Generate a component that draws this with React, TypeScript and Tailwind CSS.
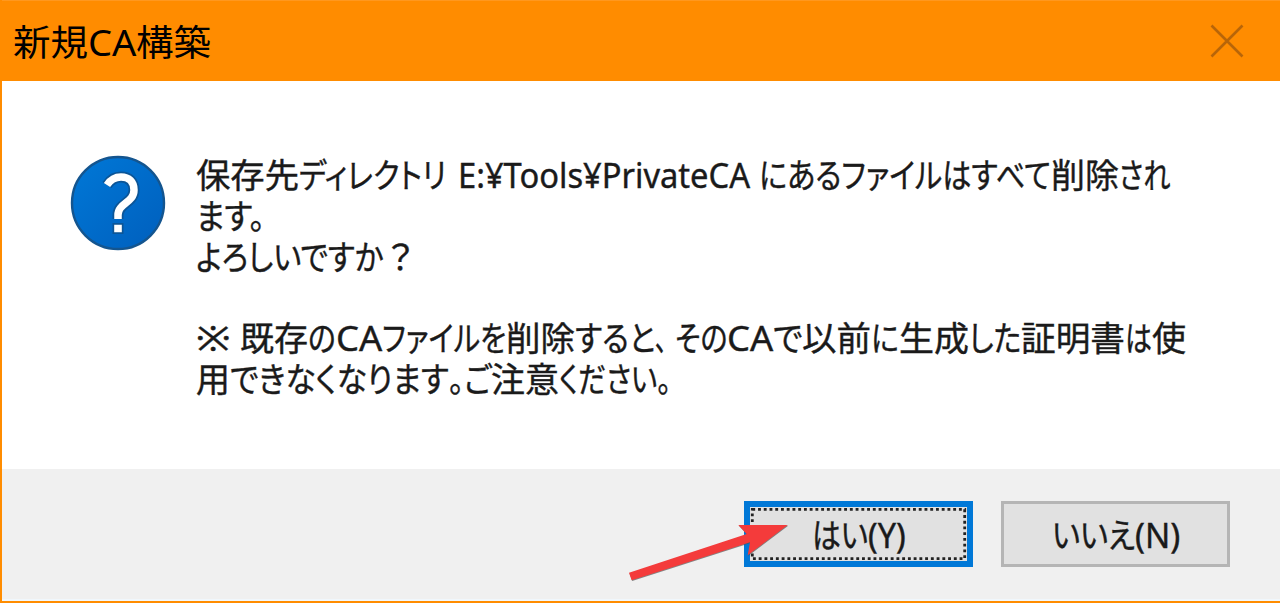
import { useLayoutEffect, useRef } from "react";

/** A run of text condensed or widened to occupy exactly `w` pixels. */
function Run({ t, w }: { t: string; w: number }) {
  const ref = useRef<HTMLSpanElement>(null);
  useLayoutEffect(() => {
    const fit = () => {
      const el = ref.current;
      if (el) el.style.transform = `scaleX(${w / el.offsetWidth})`;
    };
    fit();
    document.fonts?.ready.then(fit);
  }, [w, t]);
  return (
    <span className="block shrink-0" style={{ width: w }}>
      <span ref={ref} className="inline-block origin-left whitespace-pre">
        {t}
      </span>
    </span>
  );
}

type Piece = [string, number];

function Line({ runs }: { runs: Piece[] }) {
  return (
    <div className="flex h-[40.7px] items-center">
      {runs.map(([t, w], i) => (
        <Run key={i} t={t} w={w} />
      ))}
    </div>
  );
}

const message: Piece[][] = [
  [["保存先", 103], ["ディレクトリ", 147], [" ", 12], ["E:¥Tools¥PrivateCA", 292], [" ", 9], ["にあるファイルはすべて", 292], ["削除", 68], ["され", 51]],
  [["ます。", 69]],
  [["よろしいですか", 188], [" ", 4], ["？", 24]],
  [],
  [["※", 34], [" ", 10], ["既存", 68], ["の", 28], ["CA", 46], ["ファイルを", 124], ["削除", 69], ["すると", 80], ["、", 12], [" ", 8], ["その", 52], ["CA", 46], ["で", 29], ["以前", 69], ["に", 28], ["生成", 70], ["した", 52], ["証明書", 104], ["は", 27], ["使", 34]],
  [["用", 34], ["できなくなります", 219], ["。", 15], ["ご", 27], ["注意", 68], ["ください。", 112]],
];

export default function App() {
  return (
    <div className="relative flex h-[603px] w-[1280px] flex-col overflow-hidden border-b-2 border-l-2 border-[#ff8c00] bg-white font-['Noto_Sans','Noto_Sans_CJK_JP',sans-serif] text-[#1a1a1a] [font-feature-settings:'palt']">
      <header className="flex h-[81px] shrink-0 items-center justify-between border-t border-[#ff981f] bg-[#ff8c00] pr-[36px] pl-[11px] text-black">
        <h1 className="flex pt-[2px] text-[36.5px] leading-[50px] font-normal">
          <Run t="新規" w={75} />
          <Run t="CA" w={48} />
          <Run t="構築" w={75} />
        </h1>
        <button aria-label="閉じる" className="size-[34px]">
          <svg viewBox="0 0 34 34" className="size-full" fill="none" stroke="#b86508" strokeWidth="2.6">
            <path d="M1.5 1.5 32.5 32.5M32.5 1.5 1.5 32.5" />
          </svg>
        </button>
      </header>

      <main className="flex h-[388px] shrink-0 pt-[74px] pl-[68px]">
        <svg viewBox="0 0 96 96" className="size-[96px] shrink-0">
          <defs>
            <linearGradient id="disc" x1="0" y1="0" x2="1" y2="1">
              <stop offset="0" stopColor="#0078d7" />
              <stop offset="1" stopColor="#005fbd" />
            </linearGradient>
          </defs>
          <circle cx="48" cy="48" r="46" fill="url(#disc)" stroke="#14558f" strokeWidth="2.4" />
          <g fill="none" stroke="#0b5597" strokeWidth="11">
            <path d="M37 30C41 24 46 22 51 22C59 22 64 27 64 35C64 48 48 48 48 60V64" />
            <path d="M42.5 73.5H53.5" />
          </g>
          <g fill="none" stroke="#fff" strokeWidth="7.5">
            <path d="M37 30C41 24 46 22 51 22C59 22 64 27 64 35C64 48 48 48 48 60V64" />
            <path d="M44.2 73.5H51.8" />
          </g>
        </svg>
        <div className="ml-[30px] text-[34px] leading-[40px] [-webkit-text-stroke:0.4px_#1a1a1a]">
          {message.map((runs, i) => (
            <Line key={i} runs={runs} />
          ))}
        </div>
      </main>

      <footer className="flex grow items-start justify-end gap-[28px] border-b-2 border-[#f0f7fc] bg-[#f0f0f0] pt-[32px] pr-[50px] text-[34px] leading-[40px] [-webkit-text-stroke:0.4px_#1a1a1a]">
        <button className="relative flex h-[66px] w-[229px] items-center justify-center border-[6px] border-[#0078d7] bg-[#e1e1e1] pt-[2px]">
          <svg viewBox="0 0 217 54" className="absolute inset-0 size-full" fill="none" stroke="#222" strokeWidth="2.8" strokeDasharray="2.87 2.87">
            <rect x="2.3" y="2.3" width="212.4" height="49.4" />
          </svg>
          <Run t="はい" w={56} />
          <Run t="(Y)" w={38} />
        </button>
        <button className="flex h-[66px] w-[229px] items-center justify-center border-[3px] border-[#b5b5b5] bg-[#e1e1e1] pt-[2px]">
          <Run t="いいえ" w={83} />
          <Run t="(N)" w={45} />
        </button>
      </footer>

      <svg viewBox="0 0 170 70" className="pointer-events-none absolute top-[515px] left-[618px] h-[70px] w-[170px]">
        <path d="M9 57.7 126.7 19 118.3 10H167.7L127.7 40.3 130 27.3 11.7 65.3Z" fill="#555" opacity="0.7" transform="translate(.5 .7)" />
        <path d="M9 57.7 126.7 19 118.3 10H167.7L127.7 40.3 130 27.3 11.7 65.3Z" fill="#f43b3b" />
      </svg>
    </div>
  );
}
